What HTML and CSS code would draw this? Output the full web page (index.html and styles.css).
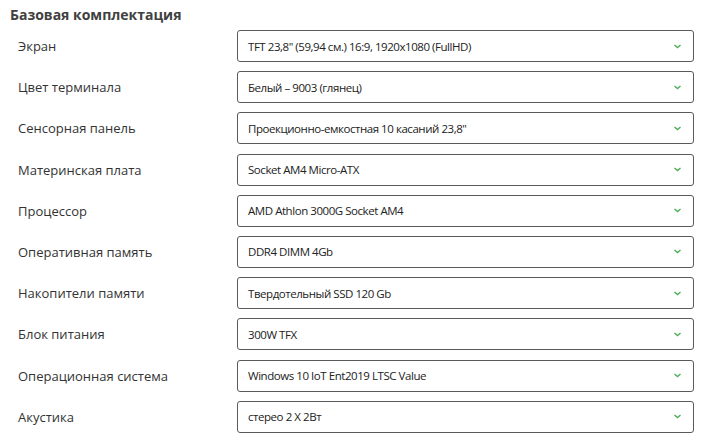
FILE: index.html
```html
<!DOCTYPE html>
<html lang="ru">
<head>
    <meta charset="UTF-8">
    <title>Базовая комплектация</title>
    <link rel="stylesheet" href="styles.css">
</head>
<body>
    <div class="config">
        <h3>Базовая комплектация</h3>
        <div class="options">
            <div class="option">
                <span class="label">Экран</span>
                <div class="select">TFT 23,8" (59,94 см.) 16:9, 1920x1080 (FullHD)<svg class="arrow" viewBox="0 0 8 5"><path d="M1 1l3 2.5L7 1"/></svg></div>
            </div>
            <div class="option">
                <span class="label">Цвет терминала</span>
                <div class="select">Белый – 9003 (глянец)<svg class="arrow" viewBox="0 0 8 5"><path d="M1 1l3 2.5L7 1"/></svg></div>
            </div>
            <div class="option">
                <span class="label">Сенсорная панель</span>
                <div class="select">Проекционно-емкостная 10 касаний 23,8"<svg class="arrow" viewBox="0 0 8 5"><path d="M1 1l3 2.5L7 1"/></svg></div>
            </div>
            <div class="option">
                <span class="label">Материнская плата</span>
                <div class="select">Socket AM4 Micro-ATX<svg class="arrow" viewBox="0 0 8 5"><path d="M1 1l3 2.5L7 1"/></svg></div>
            </div>
            <div class="option">
                <span class="label">Процессор</span>
                <div class="select">AMD Athlon 3000G Socket AM4<svg class="arrow" viewBox="0 0 8 5"><path d="M1 1l3 2.5L7 1"/></svg></div>
            </div>
            <div class="option">
                <span class="label">Оперативная память</span>
                <div class="select">DDR4 DIMM 4Gb<svg class="arrow" viewBox="0 0 8 5"><path d="M1 1l3 2.5L7 1"/></svg></div>
            </div>
            <div class="option">
                <span class="label">Накопители памяти</span>
                <div class="select">Твердотельный SSD 120 Gb<svg class="arrow" viewBox="0 0 8 5"><path d="M1 1l3 2.5L7 1"/></svg></div>
            </div>
            <div class="option">
                <span class="label">Блок питания</span>
                <div class="select">300W TFX<svg class="arrow" viewBox="0 0 8 5"><path d="M1 1l3 2.5L7 1"/></svg></div>
            </div>
            <div class="option">
                <span class="label">Операционная система</span>
                <div class="select">Windows 10 IoT Ent2019 LTSC Value<svg class="arrow" viewBox="0 0 8 5"><path d="M1 1l3 2.5L7 1"/></svg></div>
            </div>
            <div class="option">
                <span class="label">Акустика</span>
                <div class="select">стерео 2 X 2Вт<svg class="arrow" viewBox="0 0 8 5"><path d="M1 1l3 2.5L7 1"/></svg></div>
            </div>
        </div>
    </div>
</body>
</html>
```

FILE: styles.css
```css
body {
    margin: 0;
    background-color: #ffffff;
    font-family: "Open Sans", Arial, sans-serif;
    color: #333333;
}
.config {
    padding: 5px 8px 0 10px;
}
h3 {
    margin: 0;
    font-size: 14px;
    line-height: 20px;
    font-weight: bold;
    color: #404040;
}
.options {
    margin-top: 5px;
    display: flex;
    flex-direction: column;
    gap: 9.2px;
}
.option {
    display: grid;
    grid-template-columns: 227px 457px;
    align-items: center;
}
.label {
    padding-left: 8px;
    font-size: 13px;
    color: #333333;
}
.select {
    height: 32px;
    box-sizing: border-box;
    border: 1px solid #5a5a5a;
    border-radius: 3px;
    padding: 0 11px 0 10px;
    display: flex;
    align-items: center;
    justify-content: space-between;
    font-size: 11.5px;
    letter-spacing: -0.45px;
    color: #222222;
}
.arrow {
    width: 9px;
    height: 5px;
    fill: none;
    stroke: #4cae57;
    stroke-width: 1.4;
}
```
